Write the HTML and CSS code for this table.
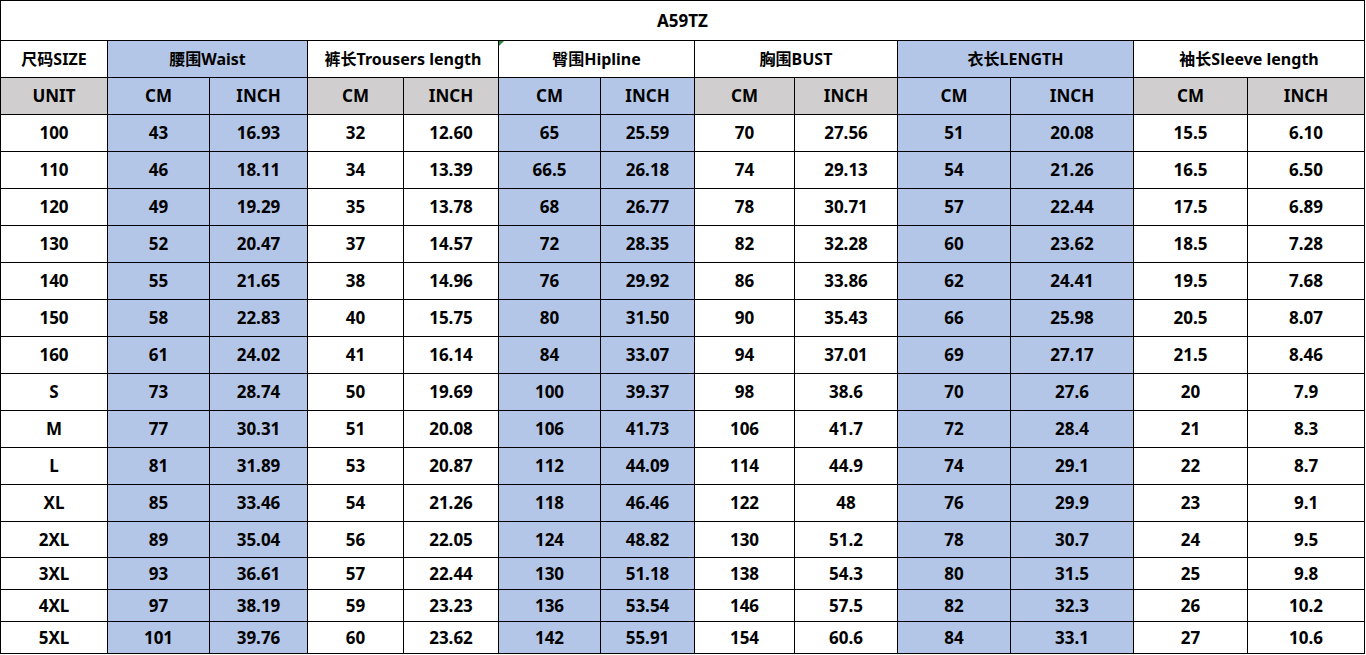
FILE: index.html
```html
<!DOCTYPE html>
<html lang="zh">
<head>
<meta charset="utf-8">
<title>A59TZ</title>
<link rel="stylesheet" href="styles.css">
</head>
<body>
<table class="chart">
  <colgroup>
    <col class="c1"><col class="c2"><col class="c3"><col class="c4"><col class="c5"><col class="c6"><col class="c7"><col class="c8"><col class="c9"><col class="c10"><col class="c11"><col class="c12"><col class="c13">
  </colgroup>
  <tr class="r-title"><td colspan="13">A59TZ</td></tr>
  <tr class="r-head">
    <td>尺码SIZE</td>
    <td colspan="2" class="blue">腰围Waist</td>
    <td colspan="2">裤长Trousers length</td>
    <td colspan="2" class="note">臀围Hipline<span class="tri"></span></td>
    <td colspan="2">胸围BUST</td>
    <td colspan="2" class="blue">衣长LENGTH</td>
    <td colspan="2">袖长Sleeve length</td>
  </tr>
  <tr class="r-unit">
    <td class="gray">UNIT</td>
    <td class="blue">CM</td><td class="blue">INCH</td>
    <td class="gray">CM</td><td class="gray">INCH</td>
    <td class="blue">CM</td><td class="blue">INCH</td>
    <td class="gray">CM</td><td class="gray">INCH</td>
    <td class="blue">CM</td><td class="blue">INCH</td>
    <td class="gray">CM</td><td class="gray">INCH</td>
  </tr>
  <tr class="r"><td>100</td><td class="blue">43</td><td class="blue">16.93</td><td>32</td><td>12.60</td><td class="blue">65</td><td class="blue">25.59</td><td>70</td><td>27.56</td><td class="blue">51</td><td class="blue">20.08</td><td>15.5</td><td>6.10</td></tr>
  <tr class="r"><td>110</td><td class="blue">46</td><td class="blue">18.11</td><td>34</td><td>13.39</td><td class="blue">66.5</td><td class="blue">26.18</td><td>74</td><td>29.13</td><td class="blue">54</td><td class="blue">21.26</td><td>16.5</td><td>6.50</td></tr>
  <tr class="r"><td>120</td><td class="blue">49</td><td class="blue">19.29</td><td>35</td><td>13.78</td><td class="blue">68</td><td class="blue">26.77</td><td>78</td><td>30.71</td><td class="blue">57</td><td class="blue">22.44</td><td>17.5</td><td>6.89</td></tr>
  <tr class="r"><td>130</td><td class="blue">52</td><td class="blue">20.47</td><td>37</td><td>14.57</td><td class="blue">72</td><td class="blue">28.35</td><td>82</td><td>32.28</td><td class="blue">60</td><td class="blue">23.62</td><td>18.5</td><td>7.28</td></tr>
  <tr class="r"><td>140</td><td class="blue">55</td><td class="blue">21.65</td><td>38</td><td>14.96</td><td class="blue">76</td><td class="blue">29.92</td><td>86</td><td>33.86</td><td class="blue">62</td><td class="blue">24.41</td><td>19.5</td><td>7.68</td></tr>
  <tr class="r"><td>150</td><td class="blue">58</td><td class="blue">22.83</td><td>40</td><td>15.75</td><td class="blue">80</td><td class="blue">31.50</td><td>90</td><td>35.43</td><td class="blue">66</td><td class="blue">25.98</td><td>20.5</td><td>8.07</td></tr>
  <tr class="r"><td>160</td><td class="blue">61</td><td class="blue">24.02</td><td>41</td><td>16.14</td><td class="blue">84</td><td class="blue">33.07</td><td>94</td><td>37.01</td><td class="blue">69</td><td class="blue">27.17</td><td>21.5</td><td>8.46</td></tr>
  <tr class="r"><td>S</td><td class="blue">73</td><td class="blue">28.74</td><td>50</td><td>19.69</td><td class="blue">100</td><td class="blue">39.37</td><td>98</td><td>38.6</td><td class="blue">70</td><td class="blue">27.6</td><td>20</td><td>7.9</td></tr>
  <tr class="r"><td>M</td><td class="blue">77</td><td class="blue">30.31</td><td>51</td><td>20.08</td><td class="blue">106</td><td class="blue">41.73</td><td>106</td><td>41.7</td><td class="blue">72</td><td class="blue">28.4</td><td>21</td><td>8.3</td></tr>
  <tr class="r"><td>L</td><td class="blue">81</td><td class="blue">31.89</td><td>53</td><td>20.87</td><td class="blue">112</td><td class="blue">44.09</td><td>114</td><td>44.9</td><td class="blue">74</td><td class="blue">29.1</td><td>22</td><td>8.7</td></tr>
  <tr class="r"><td>XL</td><td class="blue">85</td><td class="blue">33.46</td><td>54</td><td>21.26</td><td class="blue">118</td><td class="blue">46.46</td><td>122</td><td>48</td><td class="blue">76</td><td class="blue">29.9</td><td>23</td><td>9.1</td></tr>
  <tr class="r r36"><td>2XL</td><td class="blue">89</td><td class="blue">35.04</td><td>56</td><td>22.05</td><td class="blue">124</td><td class="blue">48.82</td><td>130</td><td>51.2</td><td class="blue">78</td><td class="blue">30.7</td><td>24</td><td>9.5</td></tr>
  <tr class="r r32"><td>3XL</td><td class="blue">93</td><td class="blue">36.61</td><td>57</td><td>22.44</td><td class="blue">130</td><td class="blue">51.18</td><td>138</td><td>54.3</td><td class="blue">80</td><td class="blue">31.5</td><td>25</td><td>9.8</td></tr>
  <tr class="r r32"><td>4XL</td><td class="blue">97</td><td class="blue">38.19</td><td>59</td><td>23.23</td><td class="blue">136</td><td class="blue">53.54</td><td>146</td><td>57.5</td><td class="blue">82</td><td class="blue">32.3</td><td>26</td><td>10.2</td></tr>
  <tr class="r r32"><td>5XL</td><td class="blue">101</td><td class="blue">39.76</td><td>60</td><td>23.62</td><td class="blue">142</td><td class="blue">55.91</td><td>154</td><td>60.6</td><td class="blue">84</td><td class="blue">33.1</td><td>27</td><td>10.6</td></tr>
</table>
</body>
</html>
```

FILE: styles.css
```css
html, body {
  margin: 0;
  padding: 0;
  background: #ffffff;
}

.chart {
  border-collapse: collapse;
  table-layout: fixed;
  width: 1365px;
  font-family: "Noto Sans", "Noto Sans CJK SC", sans-serif;
  font-weight: 700;
  font-size: 17px;
  color: #000;
}

.chart td {
  border: 1px solid #000;
  padding: 0 0 1px 0;
  text-align: center;
  vertical-align: middle;
  white-space: nowrap;
  line-height: 1;
}

.c1 { width: 107px; }
.c2 { width: 102px; }
.c3 { width: 98px; }
.c4 { width: 96px; }
.c5 { width: 95px; }
.c6 { width: 102px; }
.c7 { width: 94px; }
.c8 { width: 100px; }
.c9 { width: 103px; }
.c10 { width: 113px; }
.c11 { width: 123px; }
.c12 { width: 114px; }
.c13 { width: 117px; }

.r-title td { height: 38px; }
.r-head td { font-size: 16px; }
.r-head td, .r-unit td, .r td { height: 35px; }
.r36 td { height: 34px; }
.r32 td { height: 30px; }

.blue { background: #b4c6e7; }
.gray { background: #d0cece; }

.note { position: relative; }
.tri {
  position: absolute;
  left: 0;
  top: 0;
  width: 0;
  height: 0;
  border-top: 5px solid #1e8e3e;
  border-right: 5px solid transparent;
}
```
